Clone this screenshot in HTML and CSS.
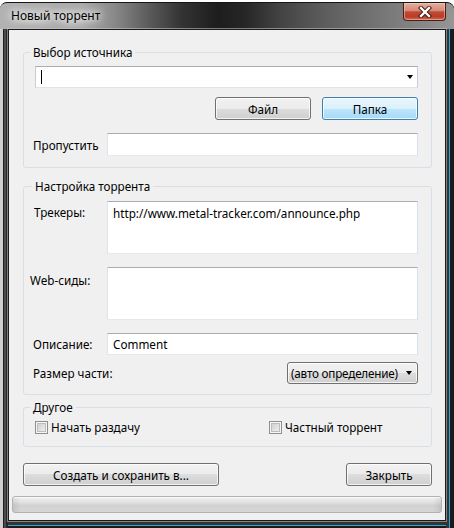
FILE: index.html
```html
<!DOCTYPE html>
<html lang="ru">
<head>
<meta charset="utf-8">
<title>Новый торрент</title>
<link rel="stylesheet" href="styles.css">
</head>
<body>
<div class="window">
  <div class="titlebar">
    <span class="title">Новый торрент</span>
    <div class="close">
      <svg width="16" height="12" viewBox="0 0 16 12">
        <path d="M4 2 L12 10 M12 2 L4 10" stroke="#3a1510" stroke-width="4.2" stroke-linecap="square" fill="none"/>
        <path d="M4 2 L12 10 M12 2 L4 10" stroke="#ffffff" stroke-width="2.4" stroke-linecap="square" fill="none"/>
      </svg>
    </div>
  </div>
  <div class="client">
    <fieldset class="group g1">
      <legend>Выбор источника</legend>
      <div class="edit combo"><span class="caret"></span><span class="arrow"></span></div>
      <div class="btn-row">
        <div class="btn">Файл</div>
        <div class="btn hot">Папка</div>
      </div>
      <div class="row row-mid gap13">
        <span class="lbl lbl-skip">Пропустить</span>
        <div class="edit field h23"></div>
      </div>
    </fieldset>

    <fieldset class="group g2">
      <legend>Настройка торрента</legend>
      <div class="row row-top">
        <span class="lbl lbl-trk">Трекеры:</span>
        <div class="edit area">http://www.metal-tracker.com/announce.php</div>
      </div>
      <div class="row row-top gap13">
        <span class="lbl lbl-web">Web-сиды:</span>
        <div class="edit area"></div>
      </div>
      <div class="row row-mid gap13">
        <span class="lbl lbl-desc">Описание:</span>
        <div class="edit field h22">Comment</div>
      </div>
      <div class="row row-mid gap7">
        <span class="lbl lbl-size">Размер части:</span>
        <div class="dropdown"><span>(авто определение)</span><span class="arrow"></span></div>
      </div>
    </fieldset>

    <fieldset class="group g3">
      <legend>Другое</legend>
      <div class="checks">
        <label class="chk chk-first"><span class="box"></span>Начать раздачу</label>
        <label class="chk"><span class="box"></span>Частный торрент</label>
      </div>
    </fieldset>

    <div class="actions">
      <div class="btn btn-create">Создать и сохранить в...</div>
      <div class="btn btn-close">Закрыть</div>
    </div>

    <div class="progress"></div>
  </div>
</div>
</body>
</html>
```

FILE: styles.css
```css
* { box-sizing: border-box; }
html, body { margin: 0; padding: 0; }
body {
  width: 454px;
  height: 528px;
  overflow: hidden;
  background: #ffffff;
  font-family: "Noto Sans", "Open Sans", "Liberation Sans", sans-serif;
  font-size: 11.7px;
  color: #000;
}

.window {
  margin-top: 2px;
  width: 454px;
  height: 526px;
  border-top: 1px solid #151515;
  border-radius: 7px 7px 0 0;
  overflow: hidden;
  display: flex;
  flex-direction: column;
  padding: 0 8px 7px;
  background:
    linear-gradient(to right, #cfcfcf 0 3px, #1e1e1e 3px 4px, #4b4b4b 4px 6px, #262626 6px 8px) left top / 8px 100% no-repeat,
    linear-gradient(to right, #343434 0 3px, #2ca7dc 3px 4px, #1a1a1a 4px) right top / 8px 100% no-repeat,
    linear-gradient(to bottom, #343434 0 4px, #2ca7dc 4px 5px, #1a1a1a 5px) left bottom / 100% 7px no-repeat,
    #2e2e2e;
}

.titlebar {
  margin: 0 -8px;
  height: 26px;
  display: flex;
  align-items: flex-start;
  justify-content: space-between;
  background: linear-gradient(to right,
    #b2b2b2 0%, #a9a9a9 18%, #8a8a8a 25%, #5a5a5a 33%, #333 40%,
    #1d1d1d 48%, #262626 54%, #444 62%, #5e5e5e 72%, #727272 82%, #858585 92%, #969696 100%);
}

.title {
  padding-left: 11px;
  line-height: 26px;
  font-size: 12px;
  color: #000;
  text-shadow: 0 0 6px #fff, 0 0 10px #fff, 0 0 14px #eee;
}

.close {
  width: 43px;
  height: 18px;
  margin-right: 8px;
  border: 1px solid #4a1d15;
  border-top: none;
  border-radius: 0 0 4px 4px;
  background: linear-gradient(to bottom, #e6ad9f 0%, #d58a79 45%, #c24a33 52%, #b93d28 80%, #d46a4f 100%);
  box-shadow: inset 0 0 0 1px rgba(255, 220, 210, 0.45);
  display: flex;
  align-items: center;
  justify-content: center;
}
.close svg { display: block; }

.client {
  flex: 1;
  background: #f0f0f0;
  border: 1px solid #1b1b1b;
  box-shadow: 0 0 0 1px rgba(200, 200, 200, 0.55);
  padding: 14px 3px 0;
  display: flex;
  flex-direction: column;
}

.group {
  margin: 0 10px 0 11px;
  border: 1px solid #d5dfe5;
  border-radius: 3px;
  min-inline-size: 0;
}
.group legend {
  padding: 0 3px;
  margin-left: -4px;
  line-height: 16px;
}
.g1 { padding: 6px 13px 11px 10px; }
.g2 { margin-top: 10px; padding: 7px 13px 10px 10px; }
.g3 { margin-top: 4px; padding: 4px 13px 11px 10px; }
.g2 legend { margin-left: -2px; }

.edit {
  background: #fff;
  border: 1px solid #dbdfe6;
  border-top-color: #abadb3;
  border-left-color: #e2e3ea;
  border-right-color: #dbdfe6;
  border-bottom-color: #e3e9ef;
}

.combo {
  margin-left: 1px;
  height: 22px;
  display: flex;
  align-items: center;
  justify-content: space-between;
  padding: 0 4px 0 5px;
  border-top-color: #abadb3;
  border-left-color: #c9ccd3;
  border-right-color: #c9ccd3;
  border-bottom-color: #dfe3ea;
}
.caret {
  width: 1px;
  height: 14px;
  background: #000;
}
.arrow {
  width: 0;
  height: 0;
  border-left: 3.5px solid transparent;
  border-right: 3.5px solid transparent;
  border-top: 4px solid #000;
  flex: none;
}

.btn-row {
  margin-top: 9px;
  display: flex;
  justify-content: flex-end;
  gap: 11px;
}

.btn {
  height: 23px;
  border: 1px solid #707070;
  border-radius: 3px;
  background: linear-gradient(to bottom, #f2f2f2 0%, #ebebeb 50%, #dddddd 50%, #cfcfcf 100%);
  box-shadow: inset 0 0 0 1px rgba(255, 255, 255, 0.75);
  display: flex;
  align-items: center;
  justify-content: center;
  line-height: 16px;
}
.btn-row .btn { width: 96px; }
.btn.hot {
  border-color: #3c7fb1;
  background: linear-gradient(to bottom, #eaf6fd 0%, #d9f0fc 50%, #bee6fd 50%, #a7d9f5 100%);
}

.row {
  display: grid;
  grid-template-columns: 73px 1fr;
}
.row-mid { align-items: center; }
.row-top { align-items: start; }
.gap13 { margin-top: 13px; }
.gap7 { margin-top: 7px; }

.lbl { line-height: 16px; white-space: nowrap; }
.lbl-skip { margin-left: -1px; }
.lbl-trk { padding-top: 3px; }
.lbl-web { padding-top: 5px; margin-left: -4px; }
.lbl-desc { margin-left: -1px; }
.lbl-size { margin-left: -1px; }

.field {
  padding: 0 5px;
  line-height: 16px;
  display: flex;
  align-items: center;
}
.h23 { height: 23px; }
.h22 { height: 22px; }

.area {
  height: 53px;
  padding: 3px 5px;
  line-height: 16px;
}

.dropdown {
  justify-self: end;
  width: 131px;
  height: 22px;
  border: 1px solid #707070;
  border-radius: 3px;
  background: linear-gradient(to bottom, #f2f2f2 0%, #ebebeb 50%, #dddddd 50%, #cfcfcf 100%);
  box-shadow: inset 0 0 0 1px rgba(255, 255, 255, 0.75);
  display: flex;
  align-items: center;
  justify-content: space-between;
  padding: 0 5px 0 3px;
  line-height: 16px;
  white-space: nowrap;
  letter-spacing: -0.2px;
}

.checks {
  display: grid;
  grid-template-columns: 235px 1fr;
  height: 16px;
}
.chk {
  display: flex;
  align-items: center;
  gap: 3px;
  line-height: 16px;
  white-space: nowrap;
}
.chk-first { margin-left: 1px; }
.box {
  width: 13px;
  height: 13px;
  border: 1px solid #8f8f8f;
  background: linear-gradient(135deg, #c9c9c9 0%, #e4e4e4 60%, #f3f3f3 100%);
  box-shadow: inset 0 0 0 1px #f6f6f6, inset 0 0 0 2px #bdbdbd;
  flex: none;
}

.actions {
  margin: 16px 10px 0 11px;
  display: flex;
  justify-content: space-between;
}
.btn-create { width: 196px; }
.btn-close { width: 86px; }

.progress {
  margin-top: 10px;
  height: 17px;
  border: 1px solid #b2b2b2;
  border-radius: 3px;
  background:
    linear-gradient(to right, rgba(0,0,0,0.08) 0, rgba(0,0,0,0) 8px, rgba(0,0,0,0) calc(100% - 8px), rgba(0,0,0,0.08) 100%),
    linear-gradient(to bottom, #f2f2f2 0%, #e2e2e2 35%, #d2d2d2 55%, #d6d6d6 100%);
  box-shadow: inset 0 1px 0 #fafafa;
}
```
